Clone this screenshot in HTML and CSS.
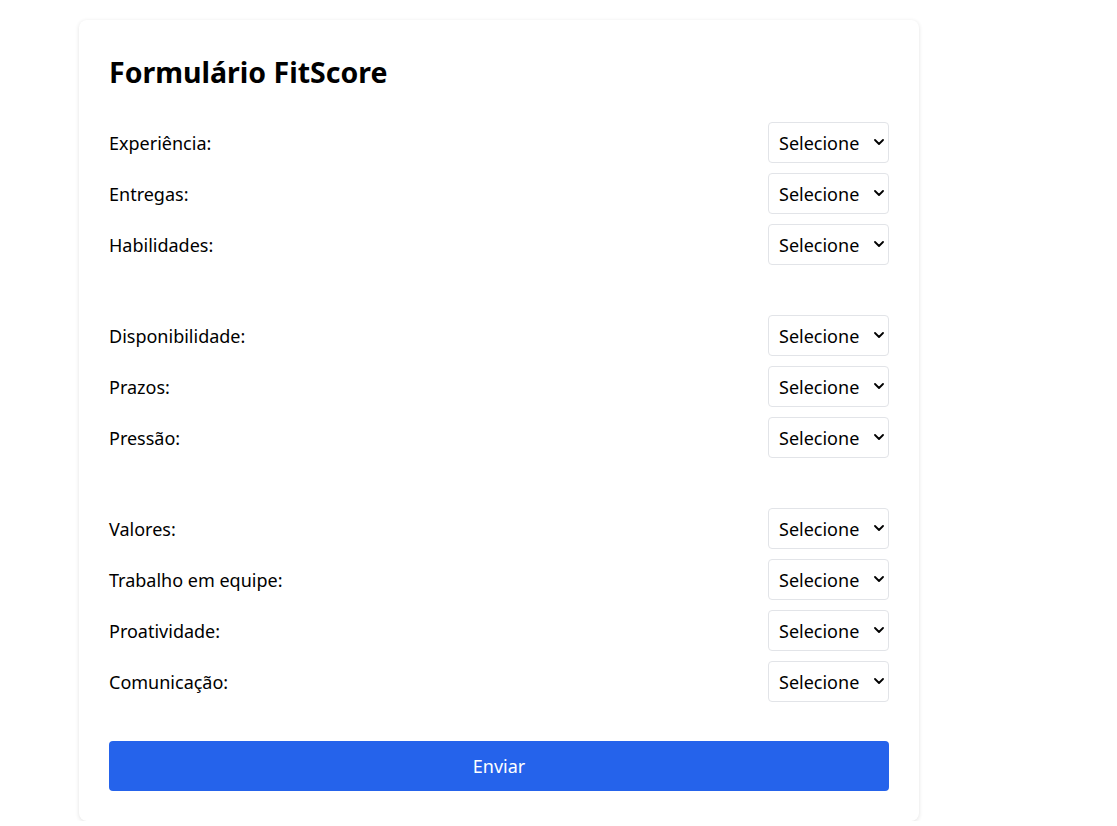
FILE: index.html
```html
<!DOCTYPE html>
<html lang="pt">
<head>
<meta charset="utf-8">
<title>Formulário FitScore</title>
<link rel="stylesheet" href="styles.css">
</head>
<body>
<form class="card">
  <h1 class="title">Formulário FitScore</h1>
  <div class="groups">
    <div class="group">
      <div class="row"><label class="label">Experiência:</label><span class="sel"><select class="select"><option>Selecione</option></select><svg class="chev" viewBox="0 0 10 6" width="10" height="6"><path d="M1 1 L5 5 L9 1" fill="none" stroke="#000" stroke-width="1.8" stroke-linecap="round" stroke-linejoin="round"/></svg></span></div>
      <div class="row"><label class="label">Entregas:</label><span class="sel"><select class="select"><option>Selecione</option></select><svg class="chev" viewBox="0 0 10 6" width="10" height="6"><path d="M1 1 L5 5 L9 1" fill="none" stroke="#000" stroke-width="1.8" stroke-linecap="round" stroke-linejoin="round"/></svg></span></div>
      <div class="row"><label class="label">Habilidades:</label><span class="sel"><select class="select"><option>Selecione</option></select><svg class="chev" viewBox="0 0 10 6" width="10" height="6"><path d="M1 1 L5 5 L9 1" fill="none" stroke="#000" stroke-width="1.8" stroke-linecap="round" stroke-linejoin="round"/></svg></span></div>
    </div>
    <div class="group">
      <div class="row"><label class="label">Disponibilidade:</label><span class="sel"><select class="select"><option>Selecione</option></select><svg class="chev" viewBox="0 0 10 6" width="10" height="6"><path d="M1 1 L5 5 L9 1" fill="none" stroke="#000" stroke-width="1.8" stroke-linecap="round" stroke-linejoin="round"/></svg></span></div>
      <div class="row"><label class="label">Prazos:</label><span class="sel"><select class="select"><option>Selecione</option></select><svg class="chev" viewBox="0 0 10 6" width="10" height="6"><path d="M1 1 L5 5 L9 1" fill="none" stroke="#000" stroke-width="1.8" stroke-linecap="round" stroke-linejoin="round"/></svg></span></div>
      <div class="row"><label class="label">Pressão:</label><span class="sel"><select class="select"><option>Selecione</option></select><svg class="chev" viewBox="0 0 10 6" width="10" height="6"><path d="M1 1 L5 5 L9 1" fill="none" stroke="#000" stroke-width="1.8" stroke-linecap="round" stroke-linejoin="round"/></svg></span></div>
    </div>
    <div class="group">
      <div class="row"><label class="label">Valores:</label><span class="sel"><select class="select"><option>Selecione</option></select><svg class="chev" viewBox="0 0 10 6" width="10" height="6"><path d="M1 1 L5 5 L9 1" fill="none" stroke="#000" stroke-width="1.8" stroke-linecap="round" stroke-linejoin="round"/></svg></span></div>
      <div class="row"><label class="label">Trabalho em equipe:</label><span class="sel"><select class="select"><option>Selecione</option></select><svg class="chev" viewBox="0 0 10 6" width="10" height="6"><path d="M1 1 L5 5 L9 1" fill="none" stroke="#000" stroke-width="1.8" stroke-linecap="round" stroke-linejoin="round"/></svg></span></div>
      <div class="row"><label class="label">Proatividade:</label><span class="sel"><select class="select"><option>Selecione</option></select><svg class="chev" viewBox="0 0 10 6" width="10" height="6"><path d="M1 1 L5 5 L9 1" fill="none" stroke="#000" stroke-width="1.8" stroke-linecap="round" stroke-linejoin="round"/></svg></span></div>
      <div class="row"><label class="label">Comunicação:</label><span class="sel"><select class="select"><option>Selecione</option></select><svg class="chev" viewBox="0 0 10 6" width="10" height="6"><path d="M1 1 L5 5 L9 1" fill="none" stroke="#000" stroke-width="1.8" stroke-linecap="round" stroke-linejoin="round"/></svg></span></div>
    </div>
  </div>
  <button class="submit" type="button">Enviar</button>
</form>
</body>
</html>
```

FILE: styles.css
```css
html, body {
  margin: 0;
  padding: 0;
  background: #ffffff;
}
body {
  font-family: "Noto Sans", "Open Sans", sans-serif;
  color: #000;
  padding: 20px 0 0 79px;
}
.card {
  box-sizing: border-box;
  width: 840px;
  padding: 30px 30px 30px;
  background: #fff;
  border-radius: 8px;
  box-shadow: 0 1px 4px rgba(0, 0, 0, 0.12);
  display: flex;
  flex-direction: column;
}
.title {
  margin: 4px 0 32px;
  font-size: 28.5px;
  line-height: 36px;
  font-weight: 700;
}
.groups {
  display: flex;
  flex-direction: column;
  gap: 50px;
}
.group {
  display: flex;
  flex-direction: column;
  gap: 10px;
}
.row {
  display: flex;
  justify-content: space-between;
  align-items: center;
  height: 41px;
}
.label {
  font-size: 18px;
}
.sel {
  position: relative;
  display: block;
}
.select {
  appearance: none;
  -webkit-appearance: none;
  box-sizing: border-box;
  width: 121px;
  height: 41px;
  padding: 0 20px 0 10px;
  border: 1px solid #e2e4e8;
  border-radius: 4px;
  background: #fff;
  font-family: inherit;
  font-size: 18px;
  color: #000;
}
.chev {
  position: absolute;
  right: 5px;
  top: 17px;
  pointer-events: none;
}
.submit {
  margin-top: 39px;
  height: 50px;
  border: none;
  border-radius: 4px;
  background: #2563eb;
  color: #fff;
  font-family: inherit;
  font-size: 18px;
}
```
